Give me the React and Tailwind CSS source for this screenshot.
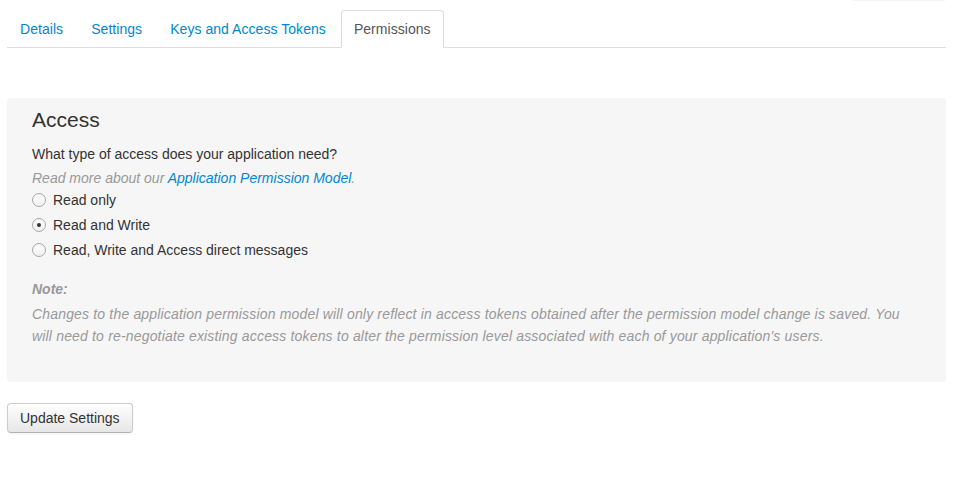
import React from 'react';

const tabs = ['Details', 'Settings', 'Keys and Access Tokens', 'Permissions'];

const options = [
  { label: 'Read only', checked: false },
  { label: 'Read and Write', checked: true },
  { label: 'Read, Write and Access direct messages', checked: false },
];

const Radio = ({ checked }) => (
  <span className="flex h-[14px] w-[14px] items-center justify-center rounded-full border border-[#a9a9a9] bg-gradient-to-b from-white to-[#f0f0f0] shadow-[inset_0_1px_1px_rgba(0,0,0,0.05)]">
    {checked && <span className="h-[4px] w-[4px] rounded-full bg-[#333]" />}
  </span>
);

const App = () => {
  return (
    <div className="min-h-[495px] bg-white pl-[7px] pr-[10px] text-[14px] leading-[20px] text-[#333]" style={{ fontFamily: '"Liberation Sans", Arial, sans-serif' }}>
      {/* sliver of something above the crop */}
      <div className="flex h-px justify-end">
        <div className="mr-px w-[92px] bg-[#f4f4f4]" />
      </div>

      <ul className="mt-[9px] flex border-b border-[#ddd] tracking-[0.05px]">
        {tabs.map((t) => {
          const active = t === 'Permissions';
          return (
            <li key={t} className="-mb-px mr-[2px]">
              <a
                className={
                  active
                    ? 'block rounded-t-[4px] border border-[#ddd] border-b-white bg-white px-[12px] py-[8px] text-[#555]'
                    : 'block rounded-t-[4px] border border-transparent px-[12px] py-[8px] text-[#0088cc]'
                }
              >
                {t}
              </a>
            </li>
          );
        })}
      </ul>

      <div className="mt-[50px] rounded-[4px] bg-[#f6f6f6] pb-[35px] pl-[25px] pr-[25px] pt-[10px]">
        <h2 className="text-[21px] leading-[24px] text-[#333]">Access</h2>
        <p className="mt-[12px]">What type of access does your application need?</p>
        <p className="mt-[4px] italic text-[#999]">
          Read more about our <a className="text-[#0088cc]">Application Permission Model</a>.
        </p>
        <div className="mt-[2px] flex flex-col gap-[5px]">
          {options.map((o) => (
            <label key={o.label} className="flex items-center gap-[7px]">
              <Radio checked={o.checked} />
              <span>{o.label}</span>
            </label>
          ))}
        </div>
        <p className="mt-[19px] font-bold italic text-[#999]">Note:</p>
        <p className="mt-[4px] leading-[22px] italic tracking-[0.17px] text-[#999]">
          Changes to the application permission model will only reflect in access tokens obtained after the permission model change is saved. You will need to re-negotiate existing access tokens to alter the permission level associated with each of your application's users.
        </p>
      </div>

      <button className="mt-[21px] rounded-[4px] border border-[#ccc] border-b-[#b3b3b3] bg-gradient-to-b from-white to-[#e6e6e6] px-[12px] py-[4px] text-[14px] leading-[20px] text-[#333] shadow-[0_1px_2px_rgba(0,0,0,0.05)]">
        Update Settings
      </button>
    </div>
  );
};

export default App;
